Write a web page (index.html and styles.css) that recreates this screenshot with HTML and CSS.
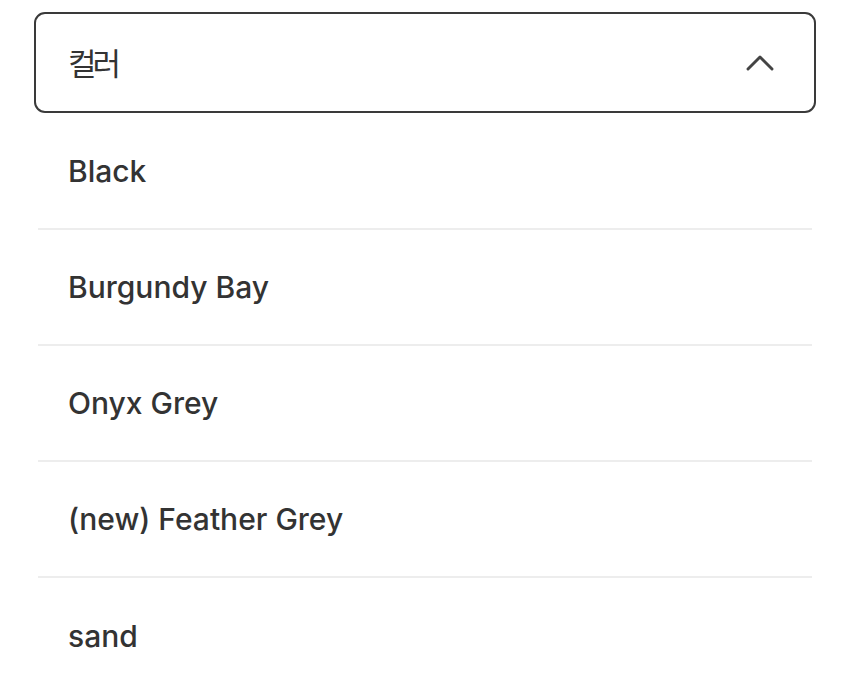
FILE: index.html
```html
<!DOCTYPE html>
<html lang="ko">
<head>
<meta charset="utf-8">
<link rel="stylesheet" href="styles.css">
</head>
<body>
<div class="dropdown">
  <div class="select">
    <span class="select-label">컬러</span>
    <svg class="chevron" width="28" height="18" viewBox="0 0 28 18" aria-hidden="true">
      <polyline points="2,15 14,3 26,15" fill="none" stroke="#444" stroke-width="2.9" stroke-linecap="round" stroke-linejoin="round"/>
    </svg>
  </div>
  <ul class="options">
    <li class="option">Black</li>
    <li class="option">Burgundy Bay</li>
    <li class="option">Onyx Grey</li>
    <li class="option">(new) Feather Grey</li>
    <li class="option">sand</li>
  </ul>
</div>
</body>
</html>
```

FILE: styles.css
```css
html, body {
  margin: 0;
  padding: 0;
  background: #ffffff;
}
body {
  font-family: Inter, "Noto Sans CJK KR", "Liberation Sans", sans-serif;
  color: #333333;
}
.dropdown {
  padding: 12px 34px 0 34px;
}
.select {
  box-sizing: border-box;
  height: 101px;
  border: 2px solid #3a3a3a;
  border-radius: 11px;
  display: flex;
  align-items: center;
  justify-content: space-between;
  padding: 0 40px 0 32px;
}
.select-label {
  font-family: "Noto Sans CJK KR", sans-serif;
  font-size: 31px;
  color: #333333;
  letter-spacing: -4px;
  margin-top: -3px;
}
.chevron {
  display: block;
}
.options {
  list-style: none;
  margin: 1px 4px 0 4px;
  padding: 0;
}
.option {
  box-sizing: border-box;
  height: 116px;
  display: flex;
  align-items: center;
  padding-left: 30px;
  font-size: 30px;
  font-weight: 450;
  border-bottom: 2px solid #ededed;
}
.option:last-child {
  border-bottom: none;
}
```
